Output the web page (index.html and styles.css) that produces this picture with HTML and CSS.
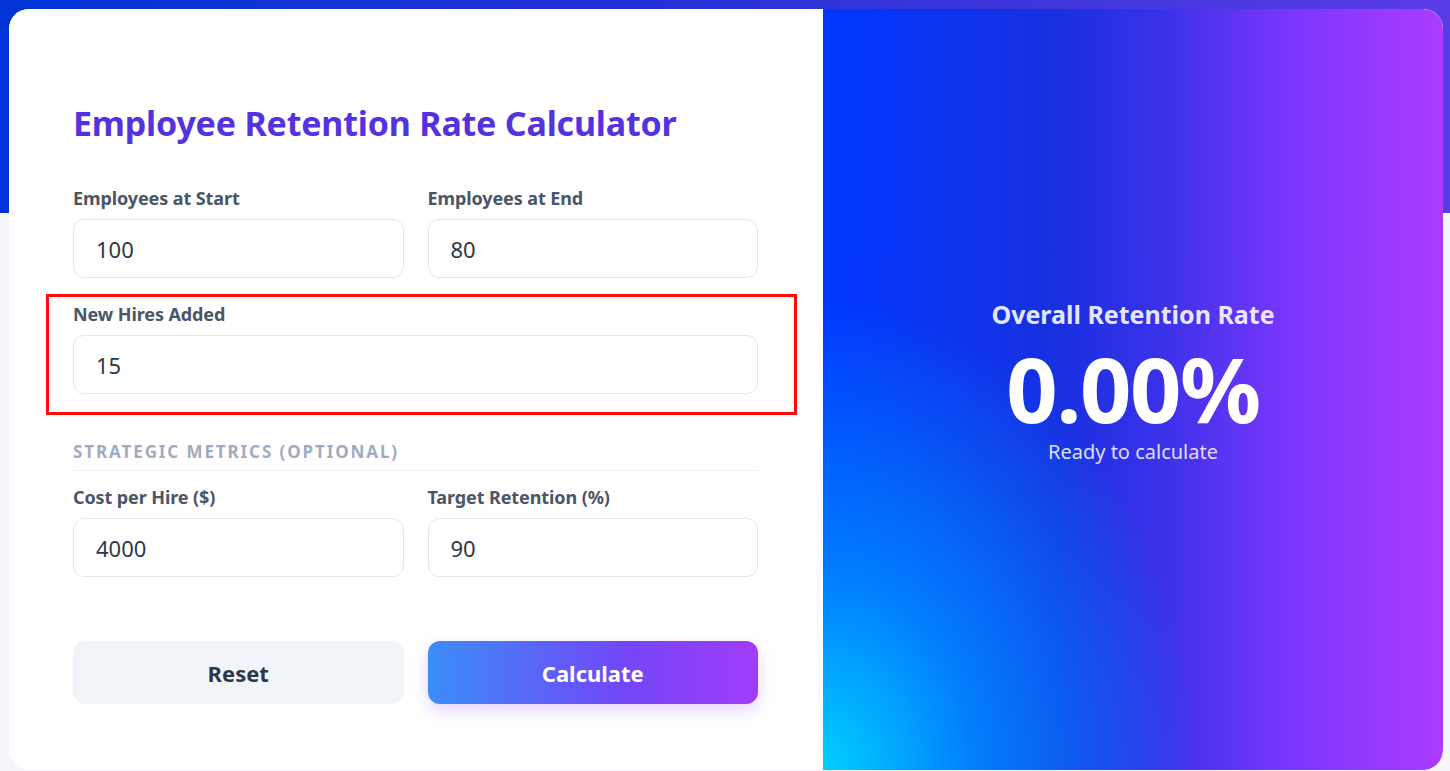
FILE: index.html
```html
<!DOCTYPE html>
<html lang="en">
<head>
<meta charset="utf-8">
<title>Employee Retention Rate Calculator</title>
<link rel="stylesheet" href="styles.css">
</head>
<body>
<div class="card">
  <section class="form-panel">
    <h1 class="title">Employee Retention Rate Calculator</h1>
    <div class="row">
      <div class="field">
        <label class="label">Employees at Start</label>
        <div class="input">100</div>
      </div>
      <div class="field">
        <label class="label">Employees at End</label>
        <div class="input">80</div>
      </div>
    </div>
    <div class="field highlighted">
      <label class="label">New Hires Added</label>
      <div class="input">15</div>
      <div class="highlight-box"></div>
    </div>
    <div class="section-head">Strategic Metrics (Optional)</div>
    <div class="row">
      <div class="field">
        <label class="label">Cost per Hire ($)</label>
        <div class="input">4000</div>
      </div>
      <div class="field">
        <label class="label">Target Retention (%)</label>
        <div class="input">90</div>
      </div>
    </div>
    <div class="row buttons">
      <button class="btn btn-reset">Reset</button>
      <button class="btn btn-calc">Calculate</button>
    </div>
  </section>
  <section class="result-panel">
    <div class="result-label">Overall Retention Rate</div>
    <div class="result-value">0.00%</div>
    <div class="result-sub">Ready to calculate</div>
  </section>
</div>
</body>
</html>
```
FILE: styles.css
```css
* { box-sizing: border-box; }
html, body { margin: 0; padding: 0; }
body {
  width: 1450px;
  height: 771px;
  overflow: hidden;
  font-family: "Noto Sans", "Open Sans", sans-serif;
  background:
    linear-gradient(90deg, #0034d4 0%, #2a32d8 50%, #5a3ce6 100%) top left / 100% 213px no-repeat,
    #f5f6f9;
  padding: 9px 7px 0 9px;
}
.card {
  display: grid;
  grid-template-columns: 814px 620px;
  height: 761px;
  border-radius: 20px;
  overflow: hidden;
  background: #fff;
}
.form-panel {
  background: #fff;
  padding: 92px 65px 0 64px;
  display: flex;
  flex-direction: column;
}
.title {
  margin: 0 0 41px;
  font-size: 34px;
  font-weight: 700;
  color: #5532e0;
  line-height: 44px;
  letter-spacing: -0.2px;
}
.row {
  display: grid;
  grid-template-columns: 1fr 1fr;
  column-gap: 24px;
}
.field {
  display: flex;
  flex-direction: column;
  margin-bottom: 24px;
}
.label {
  font-size: 18px;
  font-weight: 700;
  color: #4a5568;
  line-height: 24px;
  margin-bottom: 9px;
  letter-spacing: -0.1px;
}
.input {
  height: 59px;
  border: 1.5px solid #e3e8ef;
  border-radius: 11px;
  padding: 0 22px;
  display: flex;
  align-items: center;
  font-size: 22px;
  color: #2d3748;
}
.highlighted { position: relative; margin-bottom: 46px; }
.highlight-box {
  position: absolute;
  left: -27px;
  right: -39px;
  top: -8px;
  bottom: -21px;
  border: 3px solid #ff0a0a;
}
.section-head {
  font-size: 17px;
  font-weight: 700;
  text-transform: uppercase;
  letter-spacing: 1.9px;
  color: #a0abc0;
  padding-bottom: 6px;
  border-bottom: 1.5px solid #edf1f6;
  margin-bottom: 14px;
  line-height: 24px;
}
.buttons { margin-top: 40px; }
.btn {
  height: 63px;
  border: none;
  border-radius: 12px;
  font-family: inherit;
  font-size: 22px;
  font-weight: 700;
}
.btn-reset {
  background: #f1f4f8;
  color: #2d3748;
}
.btn-calc {
  background: linear-gradient(90deg, #3b8df7 0%, #7346f7 60%, #a13cf9 100%);
  color: #fff;
  box-shadow: 0 6px 16px rgba(160, 80, 250, 0.25);
}
.result-panel {
  background:
    radial-gradient(ellipse 60% 62% at 0% 100%, #00d0ff 0%, rgba(0, 140, 255, 0.85) 40%, rgba(0, 90, 255, 0) 100%),
    linear-gradient(90deg, #0038ff 0%, #1830e0 38%, #3b32ea 55%, #7a36fd 75%, #ac3bff 100%);
  border-radius: 0 20px 20px 0;
  display: flex;
  flex-direction: column;
  align-items: center;
  justify-content: center;
  color: #fff;
  padding-bottom: 17px;
}
.result-label {
  font-size: 25px;
  font-weight: 700;
  color: rgba(255, 255, 255, 0.9);
  line-height: 32px;
  margin-bottom: 10px;
}
.result-value {
  font-size: 90px;
  font-weight: 700;
  line-height: 96px;
  letter-spacing: -1.5px;
}
.result-sub {
  font-size: 20px;
  color: rgba(255, 255, 255, 0.85);
  line-height: 26px;
  margin-top: 3px;
}
```
